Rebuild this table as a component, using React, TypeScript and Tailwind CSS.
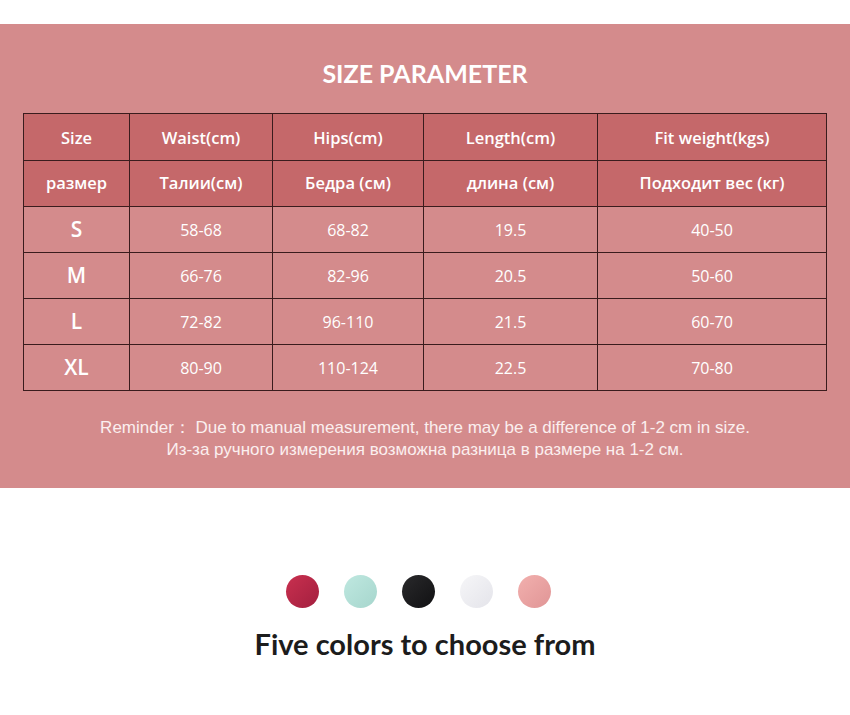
const HEADER_EN = ["Size", "Waist(cm)", "Hips(cm)", "Length(cm)", "Fit weight(kgs)"];
const HEADER_RU = ["размер", "Талии(см)", "Бедра (см)", "длина (см)", "Подходит вес (кг)"];

const ROWS = [
  ["S", "58-68", "68-82", "19.5", "40-50"],
  ["M", "66-76", "82-96", "20.5", "50-60"],
  ["L", "72-82", "96-110", "21.5", "60-70"],
  ["XL", "80-90", "110-124", "22.5", "70-80"]
];

const COL_WIDTHS = ["w-[106px]", "w-[143px]", "w-[151px]", "w-[174px]", "w-[229px]"];

const SWATCHES = [
  "bg-gradient-to-br from-[#c9304f] to-[#a31f3f]",
  "bg-gradient-to-br from-[#bfe8e0] to-[#a6d6cd]",
  "bg-gradient-to-br from-[#2a2a2c] to-[#111113]",
  "bg-gradient-to-br from-[#f6f6f8] to-[#e4e4ea]",
  "bg-gradient-to-br from-[#f2b0ae] to-[#e09596]"
];

export default function App() {
  return (
    <div className="w-[850px] h-[715px] bg-white overflow-hidden">
      <div className="h-[24px]" />

      <section className="h-[464px] bg-[#d48b8c] flex flex-col">
        <h1 className="mt-[34px] h-[30px] text-center text-[25px] leading-[30px] font-bold text-white [font-family:Lato,sans-serif]">
          SIZE PARAMETER
        </h1>

        <table className="mt-[25px] ml-[23px] w-[804px] border-collapse table-fixed text-white [font-family:'Open_Sans',sans-serif]">
          <colgroup>
            {COL_WIDTHS.map((w, i) => (
              <col key={i} className={w} />
            ))}
          </colgroup>
          <tbody>
            <tr className="bg-[#c5686a]">
              {HEADER_EN.map((h) => (
                <td key={h} className="h-[47px] pt-[2px] border border-[#3a1c1d] text-center text-[16.5px] font-semibold">
                  {h}
                </td>
              ))}
            </tr>
            <tr className="bg-[#c5686a]">
              {HEADER_RU.map((h) => (
                <td key={h} className="h-[46px] border border-[#3a1c1d] text-center text-[16.5px] font-semibold">
                  {h}
                </td>
              ))}
            </tr>
            {ROWS.map((row) => (
              <tr key={row[0]}>
                {row.map((cell, i) => (
                  <td
                    key={i}
                    className={
                      i === 0
                        ? "h-[46px] border border-[#3a1c1d] text-center text-[21px] font-semibold"
                        : "h-[46px] border border-[#3a1c1d] text-center text-[16px]"
                    }
                  >
                    {cell}
                  </td>
                ))}
              </tr>
            ))}
          </tbody>
        </table>

        <div className="mt-[26px] text-center text-[17px] leading-[22px] text-[#fbefef] [font-family:'Liberation_Sans',Arial,sans-serif]">
          <p>Reminder：&nbsp;Due to manual measurement, there may be a difference of 1-2 cm in size.</p>
          <p>Из-за ручного измерения возможна разница в размере на 1-2 см.</p>
        </div>
      </section>

      <div className="mt-[87px] pr-[13px] flex justify-center gap-[25px]">
        {SWATCHES.map((s, i) => (
          <div key={i} className={`w-[33px] h-[33px] rounded-full ${s}`} />
        ))}
      </div>

      <p className="mt-[19px] text-center text-[29px] leading-[34px] font-bold text-[#1c1c1c] [font-family:Lato,sans-serif]">
        Five colors to choose from
      </p>
    </div>
  );
}
